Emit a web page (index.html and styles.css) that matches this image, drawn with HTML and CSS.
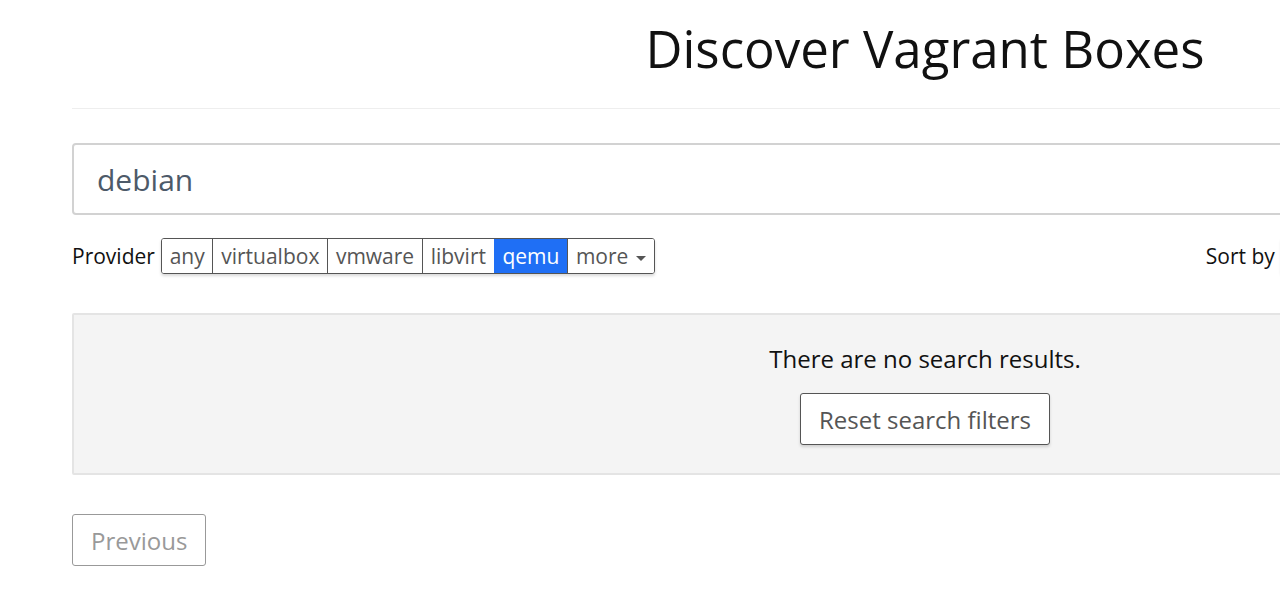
FILE: index.html
```html
<!DOCTYPE html>
<html lang="en">
<head>
  <meta charset="UTF-8">
  <title>Discover Vagrant Boxes</title>
  <link rel="stylesheet" href="styles.css">
</head>
<body>
  <div class="container">
    <h1>Discover Vagrant Boxes</h1>

    <input class="search" type="text" value="debian">

    <div class="filters">
      <div class="provider">
        <span class="label">Provider</span>
        <div class="btn-group">
          <button>any</button>
          <button>virtualbox</button>
          <button>vmware</button>
          <button>libvirt</button>
          <button class="active">qemu</button>
          <button>more <span class="caret"></span></button>
        </div>
      </div>
      <div class="sort">
        <span class="label">Sort by</span>
        <div class="btn-group">
          <button>Downloads</button>
          <button>Recently Created</button>
          <button>Recently Updated</button>
        </div>
      </div>
    </div>

    <div class="empty">
      <p>There are no search results.</p>
      <button class="btn">Reset search filters</button>
    </div>

    <div class="pager">
      <button class="btn btn-disabled">Previous</button>
    </div>
  </div>
</body>
</html>
```

FILE: styles.css
```css
html, body {
  overflow: hidden;
}

body {
  margin: 0;
  font-family: 'Open Sans', sans-serif;
  color: #111;
  background: #fff;
}

.container {
  width: 1706px;
  margin-left: 72px;
}

h1 {
  margin: 0;
  padding: 16px 0 28px;
  font-size: 51px;
  font-weight: 400;
  line-height: 64px;
  text-align: center;
  border-bottom: 1px solid #eee;
}

.search {
  display: block;
  box-sizing: border-box;
  width: 100%;
  height: 72px;
  margin-top: 34px;
  padding: 0 23px;
  font-family: 'Open Sans', sans-serif;
  font-size: 30px;
  color: #4d5a69;
  border: 2px solid #d2d2d2;
  border-radius: 4px;
  outline: none;
}

.filters {
  display: flex;
  justify-content: space-between;
  margin-top: 23px;
}

.provider, .sort {
  display: flex;
  align-items: center;
}

.label {
  font-size: 21px;
  margin-right: 6px;
}

.btn-group {
  display: flex;
  border: 1px solid #555;
  border-radius: 3px;
  box-shadow: 0 2px 3px rgba(0, 0, 0, 0.15);
  overflow: hidden;
}

.btn-group button {
  height: 34px;
  padding: 0 7.75px;
  font-family: 'Open Sans', sans-serif;
  font-size: 21px;
  color: #555;
  background: #fff;
  border: none;
  border-left: 1px solid #555;
}

.btn-group button:first-child {
  border-left: none;
}

.btn-group button.active {
  background: #1f6ff5;
  color: #fff;
  border-left-color: #1f6ff5;
}

.sort .btn-group button {
  padding: 0 7.5px;
}

.caret {
  display: inline-block;
  vertical-align: middle;
  margin-left: 2px;
  border-left: 5px solid transparent;
  border-right: 5px solid transparent;
  border-top: 5px solid #555;
}

.empty {
  margin-top: 39px;
  padding: 27px 0 28px;
  background: #f4f4f4;
  border: 2px solid #e4e4e4;
  border-radius: 2px;
  text-align: center;
}

.empty p {
  margin: 0 0 18px;
  font-size: 24px;
  line-height: 33px;
}

.btn {
  height: 52px;
  padding: 0 18px;
  font-family: 'Open Sans', sans-serif;
  font-size: 24px;
  color: #555;
  background: #fff;
  border: 1px solid #555;
  border-radius: 3px;
  box-shadow: 0 2px 3px rgba(0, 0, 0, 0.15);
}

.pager {
  margin-top: 39px;
}

.btn-disabled {
  color: #999;
  border-color: #999;
  box-shadow: none;
}
```
